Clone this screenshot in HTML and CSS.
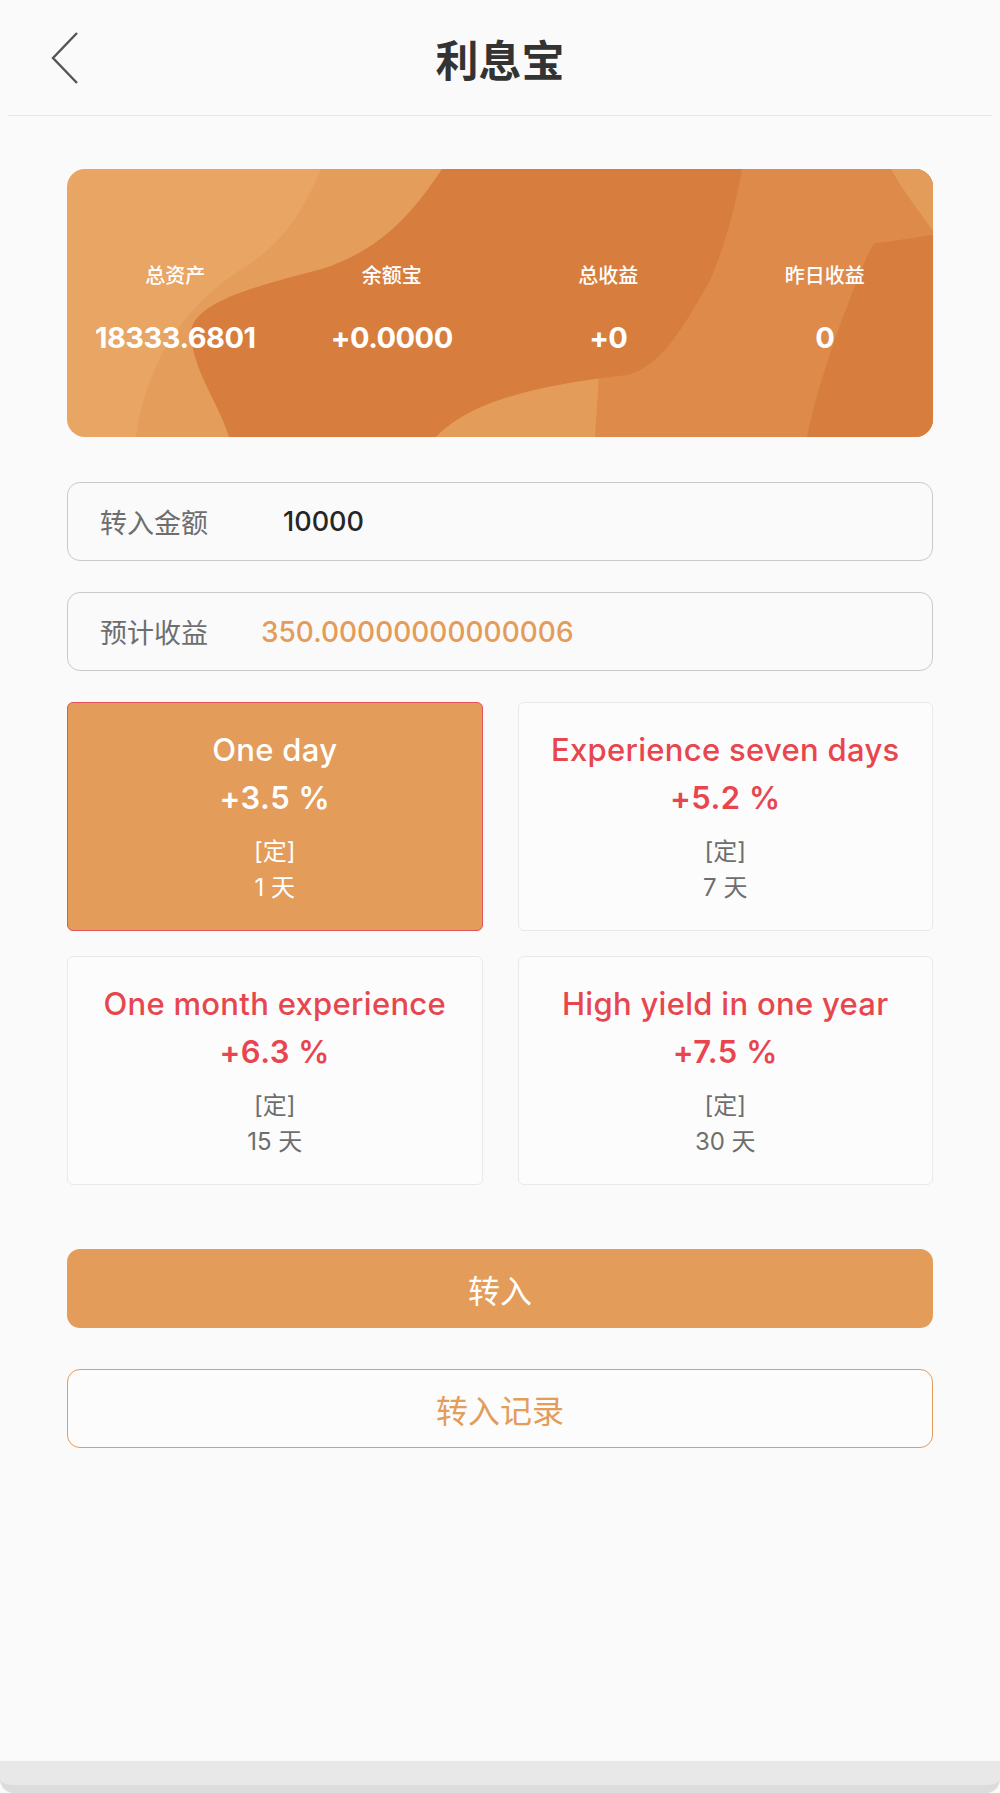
FILE: index.html
```html
<!DOCTYPE html>
<html lang="zh-CN">
<head>
    <meta charset="UTF-8">
    <meta name="viewport" content="width=device-width, initial-scale=1.0">
    <title>利息宝</title>
    <link rel="stylesheet" href="styles.css">
</head>
<body>
    <div class="page">
        <header class="top-bar">
            <a class="back" href="#">
                <svg width="28" height="54" viewBox="0 0 28 54">
                    <polyline points="26,2 2,27 26,52" fill="none" stroke="#555" stroke-width="2.4"/>
                </svg>
            </a>
            <h1>利息宝</h1>
        </header>

        <main class="content">
            <!-- 资产卡片 -->
            <section class="asset-card">
                <svg class="asset-bg" viewBox="0 0 866 268" preserveAspectRatio="none">
                    <rect width="866" height="268" fill="#e8a563"/>
                    <path d="M254,0 C235,45 215,75 175,100 C120,135 80,190 69,268 L866,268 L866,0 Z" fill="#e49d5b"/>
                    <path d="M675,0 L866,0 L866,268 L369,268 Z" fill="#dd8a4b"/>
                    <path d="M369,268 C395,238 440,220 510,210 L532,206 L528,268 Z" fill="#e39c59"/>
                    <path d="M375,0 C345,45 315,80 255,100 C185,118 120,135 124,168 C128,205 152,235 162,268 L369,268 C400,236 455,218 560,206 C598,196 620,150 643,112 C660,72 670,30 675,0 Z" fill="#d77e3f"/>
                    <path d="M740,268 C752,210 775,150 786,122 C795,100 802,80 808,74 C830,72 850,68 866,66 L866,268 Z" fill="#d77e3f"/>
                    <path d="M824,0 L866,0 L866,62 C852,42 836,22 824,0 Z" fill="#e39c59"/>
                </svg>
                <div class="asset-item">
                    <span class="asset-label">总资产</span>
                    <span class="asset-value">18333.6801</span>
                </div>
                <div class="asset-item">
                    <span class="asset-label">余额宝</span>
                    <span class="asset-value">+0.0000</span>
                </div>
                <div class="asset-item">
                    <span class="asset-label">总收益</span>
                    <span class="asset-value">+0</span>
                </div>
                <div class="asset-item">
                    <span class="asset-label">昨日收益</span>
                    <span class="asset-value">0</span>
                </div>
            </section>

            <div class="field">
                <span class="field-label">转入金额</span>
                <span class="field-input">10000</span>
            </div>
            <div class="field">
                <span class="field-label">预计收益</span>
                <span class="field-value">350.00000000000006</span>
            </div>

            <!-- 产品列表 -->
            <section class="plans">
                <div class="plan active">
                    <div class="plan-name">One day</div>
                    <div class="plan-rate">+3.5 %</div>
                    <div class="plan-type">[定]</div>
                    <div class="plan-days">1 天</div>
                </div>
                <div class="plan">
                    <div class="plan-name">Experience seven days</div>
                    <div class="plan-rate">+5.2 %</div>
                    <div class="plan-type">[定]</div>
                    <div class="plan-days">7 天</div>
                </div>
                <div class="plan">
                    <div class="plan-name">One month experience</div>
                    <div class="plan-rate">+6.3 %</div>
                    <div class="plan-type">[定]</div>
                    <div class="plan-days">15 天</div>
                </div>
                <div class="plan">
                    <div class="plan-name">High yield in one year</div>
                    <div class="plan-rate">+7.5 %</div>
                    <div class="plan-type">[定]</div>
                    <div class="plan-days">30 天</div>
                </div>
            </section>

            <button class="btn btn-primary">转入</button>
            <button class="btn btn-outline">转入记录</button>
        </main>

        <div class="bottom-bar"></div>
    </div>
</body>
</html>
```

FILE: styles.css
```css
/* 页面基础 */
html, body {
    margin: 0;
    padding: 0;
    background: #fafafa;
    font-family: Inter, "Noto Sans CJK SC", sans-serif;
}

.page {
    width: 1000px;
    height: 1793px;
    display: flex;
    flex-direction: column;
    overflow: hidden;
}

.top-bar {
    height: 115px;
    margin: 0 8px;
    border-bottom: 1px solid #e6e6e6;
    display: flex;
    align-items: center;
    justify-content: center;
    position: relative;
}

.back {
    position: absolute;
    left: 43px;
    top: 31px;
    display: block;
    line-height: 0;
}

.top-bar h1 {
    margin: 0;
    font-family: "Noto Sans CJK SC", sans-serif;
    font-size: 43px;
    font-weight: bold;
    color: #333;
}

.content {
    flex: 1;
    padding: 53px 67px 0;
    display: flex;
    flex-direction: column;
}

/* 资产卡片 */
.asset-card {
    height: 268px;
    border-radius: 18px;
    overflow: hidden;
    position: relative;
    display: flex;
    color: #fff;
}

.asset-bg {
    position: absolute;
    left: 0;
    top: 0;
    width: 100%;
    height: 100%;
}

.asset-item {
    flex: 1;
    position: relative;
    display: flex;
    flex-direction: column;
    align-items: center;
    padding-top: 93px;
}

.asset-label {
    font-family: "Noto Sans CJK SC", sans-serif;
    font-size: 20px;
    line-height: 26px;
    font-weight: 500;
}

.asset-value {
    margin-top: 32px;
    font-size: 29px;
    line-height: 36px;
    font-weight: 700;
    letter-spacing: -0.5px;
}

/* 输入行 */
.field {
    height: 77px;
    margin-top: 45px;
    border: 1px solid #c9c9c9;
    border-radius: 13px;
    display: flex;
    align-items: center;
    padding-left: 32px;
}

.field + .field {
    margin-top: 31px;
}

.field-label {
    width: 161px;
    font-family: "Noto Sans CJK SC", sans-serif;
    font-size: 27px;
    color: #6e6e6e;
}

.field-input {
    padding-left: 22px;
    font-size: 27px;
    font-weight: 500;
    color: #262626;
}

.field-value {
    font-size: 28px;
    font-weight: 500;
    color: #e39c5a;
}

/* 产品 */
.plans {
    margin-top: 31px;
    display: grid;
    grid-template-columns: 1fr 1fr;
    column-gap: 35px;
    row-gap: 25px;
}

.plan {
    height: 229px;
    box-sizing: border-box;
    border: 1px solid #e9e9e9;
    border-radius: 6px;
    background: #fcfcfc;
    display: flex;
    flex-direction: column;
    align-items: center;
    padding-top: 29px;
}

.plan.active {
    background: #e39c5a;
    border-color: #e4525a;
}

.plan-name {
    font-size: 31px;
    line-height: 36px;
    font-weight: 500;
    letter-spacing: 0.3px;
    color: #e8464f;
    white-space: nowrap;
}

.plan-rate {
    margin-top: 12px;
    font-size: 31px;
    line-height: 36px;
    font-weight: 600;
    letter-spacing: 0.5px;
    color: #e8464f;
}

.plan-type,
.plan-days {
    font-size: 24px;
    line-height: 30px;
    color: #6e6e6e;
}

.plan-type {
    margin-top: 21px;
}

.plan-days {
    margin-top: 6px;
}

.plan.active .plan-name,
.plan.active .plan-rate,
.plan.active .plan-type,
.plan.active .plan-days {
    color: #fff;
}

/* 按钮 */
.btn {
    display: block;
    width: 100%;
    height: 79px;
    border-radius: 13px;
    font-family: "Noto Sans CJK SC", sans-serif;
    font-size: 32px;
    cursor: pointer;
}

.btn-primary {
    margin-top: 64px;
    border: none;
    background: #e39c5a;
    color: #fff;
}

.btn-outline {
    margin-top: 41px;
    border: 1px solid #e39c5a;
    background: #fcfcfc;
    color: #e39c5a;
}

/* 底部 */
.bottom-bar {
    height: 24px;
    background: #e8e8e8;
    border-bottom: 8px solid #dcdcdc;
    border-radius: 0 0 14px 14px;
}
```
